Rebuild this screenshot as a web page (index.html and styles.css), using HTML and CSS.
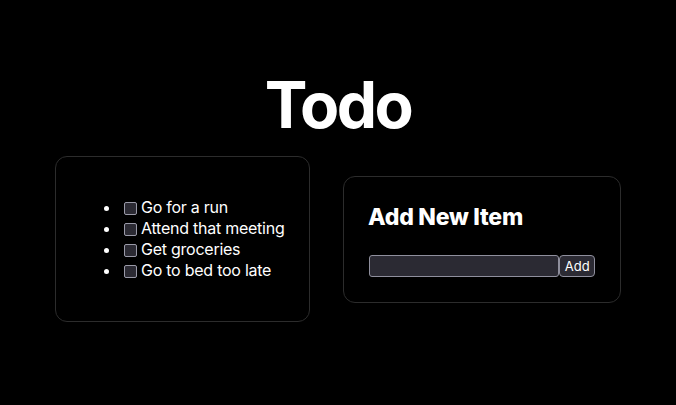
FILE: index.html
```html
<!DOCTYPE html>
<html lang="en">
<head>
<meta charset="utf-8">
<title>Todo</title>
<link rel="stylesheet" href="styles.css">
</head>
<body>
<main class="app">
  <h1 class="title">Todo</h1>
  <div class="cards">
    <section class="card list-card">
      <ul class="todo-list">
        <li><input type="checkbox" class="check"><span>Go for a run</span></li>
        <li><input type="checkbox" class="check"><span>Attend that meeting</span></li>
        <li><input type="checkbox" class="check"><span>Get groceries</span></li>
        <li><input type="checkbox" class="check"><span>Go to bed too late</span></li>
      </ul>
    </section>
    <section class="card add-card">
      <h2 class="add-title">Add New Item</h2>
      <form class="add-form">
        <input type="text" class="add-input">
        <button type="button" class="add-btn">Add</button>
      </form>
    </section>
  </div>
</main>
</body>
</html>
```
FILE: styles.css
```css
html, body {
  margin: 0;
  padding: 0;
  background: #000;
  color: #fff;
  font-family: Inter, "Noto Sans", sans-serif;
}
.app {
  display: flex;
  flex-direction: column;
  align-items: center;
  padding-top: 71px;
}
.title {
  margin: 0 0 17px;
  font-size: 64px;
  line-height: 68px;
  font-weight: 700;
  letter-spacing: -2.5px;
}
.cards {
  display: flex;
  align-items: center;
  gap: 33px;
}
.card {
  border: 1px solid #2c2c2c;
  border-radius: 12px;
  box-sizing: border-box;
}
.list-card {
  width: 255px;
  padding: 24px 20px 24px 24px;
}
.todo-list {
  margin: 16px 0;
  padding-left: 40px;
  font-size: 16px;
  line-height: 21px;
  letter-spacing: -0.25px;
  white-space: nowrap;
}
.todo-list li::marker {
  font-size: 14px;
}
.check {
  appearance: none;
  -webkit-appearance: none;
  width: 13px;
  height: 13px;
  margin: 0 4px 0 4px;
  vertical-align: -2px;
  background: #2b2a33;
  border: 1px solid #9a9aa8;
  border-radius: 2px;
  box-sizing: border-box;
}
.add-card {
  width: 278px;
  padding: 24px 25px 25px 24px;
}
.add-title {
  margin: 0 0 22px;
  font-size: 23px;
  line-height: 32px;
  font-weight: 800;
  letter-spacing: -0.25px;
}
.add-form {
  display: flex;
  margin: 0 0 0 1px;
}
.add-input {
  width: 192px;
  height: 22px;
  box-sizing: border-box;
  margin: 0;
  background: #2b2a33;
  border: 1px solid #8f8f9d;
  border-radius: 3px;
  color: #fff;
  padding: 0 4px;
}
.add-btn {
  width: 36px;
  height: 22px;
  box-sizing: border-box;
  margin: 0;
  padding: 0;
  background: #2b2a33;
  border: 1px solid #8f8f9d;
  border-radius: 4px;
  color: #fff;
  font-family: Inter, "Noto Sans", sans-serif;
  font-size: 13px;
}
```
